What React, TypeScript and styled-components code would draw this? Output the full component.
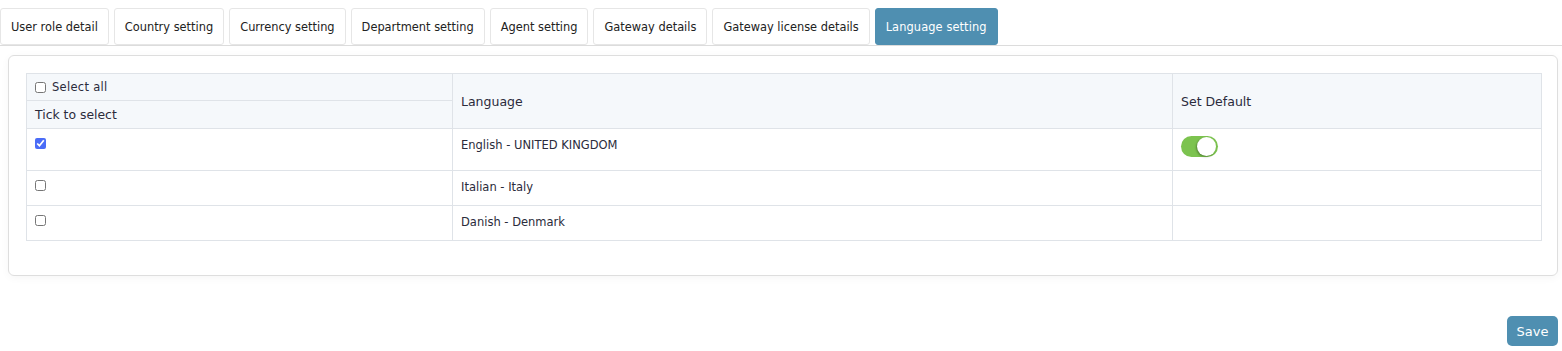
import React, { useState } from 'react'
import styled, { createGlobalStyle } from 'styled-components'

const GlobalStyle = createGlobalStyle`
  * { box-sizing: border-box; }
  body {
    margin: 0;
    background: #ffffff;
    font-family: "DejaVu Sans", "Open Sans", sans-serif;
    color: #212529;
  }
`

const tabs = [
  'User role detail',
  'Country setting',
  'Currency setting',
  'Department setting',
  'Agent setting',
  'Gateway details',
  'Gateway license details',
  'Language setting',
]

const languages = [
  { name: 'English - UNITED KINGDOM', checked: true, isDefault: true },
  { name: 'Italian - Italy', checked: false, isDefault: false },
  { name: 'Danish - Denmark', checked: false, isDefault: false },
]

const App: React.FC = () => {
  const [rows, setRows] = useState(languages)
  const allChecked = rows.every((r) => r.checked)

  const toggleRow = (i: number) =>
    setRows(rows.map((r, idx) => (idx === i ? { ...r, checked: !r.checked } : r)))

  return (
    <Page>
      <GlobalStyle />
      <TabBar>
        {tabs.map((tab) => (
          <Tab key={tab} $active={tab === 'Language setting'}>
            {tab}
          </Tab>
        ))}
      </TabBar>

      <Card>
        <Table>
          <thead>
            <tr>
              <HeadCell $narrow>
                <CheckLabel>
                  <Check
                    type="checkbox"
                    checked={allChecked}
                    onChange={() => setRows(rows.map((r) => ({ ...r, checked: !allChecked })))}
                  />
                  Select all
                </CheckLabel>
              </HeadCell>
              <HeadCell rowSpan={2} $width="720px">Language</HeadCell>
              <HeadCell rowSpan={2}>Set Default</HeadCell>
            </tr>
            <tr>
              <HeadCell $sub>Tick to select</HeadCell>
            </tr>
          </thead>
          <tbody>
            {rows.map((row, i) => (
              <tr key={row.name}>
                <Cell $tall={row.isDefault}>
                  <Check type="checkbox" checked={row.checked} onChange={() => toggleRow(i)} />
                </Cell>
                <Cell $tall={row.isDefault}>{row.name}</Cell>
                <Cell $tall={row.isDefault}>
                  {row.isDefault && (
                    <Switch>
                      <Knob />
                    </Switch>
                  )}
                </Cell>
              </tr>
            ))}
          </tbody>
        </Table>
      </Card>

      <Footer>
        <SaveButton>Save</SaveButton>
      </Footer>
    </Page>
  )
}

export default App

const Page = styled.div`
  width: 1562px;
  height: 351px;
  padding-top: 8px;
`

const TabBar = styled.div`
  display: flex;
  gap: 5px;
  border-bottom: 1px solid #dcdcdc;
  height: 38px;
`

const Tab = styled.div<{ $active?: boolean }>`
  height: 37px;
  padding: 0 10px;
  display: flex;
  align-items: center;
  font-size: 11.4px;
  color: ${({ $active }) => ($active ? '#ffffff' : '#222')};
  background: ${({ $active }) => ($active ? '#4f8fb1' : '#ffffff')};
  border: 1px solid ${({ $active }) => ($active ? '#4f8fb1' : '#e6e6e6')};
  border-radius: 3px;
  letter-spacing: ${({ $active }) => ($active ? '0.1px' : '0')};
  white-space: nowrap;
`

const Card = styled.div`
  margin: 9px 4px 0 8px;
  height: 221px;
  border: 1px solid #dedede;
  border-radius: 6px;
  box-shadow: 0 2px 8px rgba(0, 0, 0, 0.04);
  padding: 17px 17px;
`

const Table = styled.table`
  width: 1516px;
  border-collapse: collapse;
  font-size: 11.5px;
  color: #2b2b3b;
`

const HeadCell = styled.th<{ $narrow?: boolean; $sub?: boolean; $width?: string }>`
  background: #f5f8fb;
  border: 1px solid #dfe3e8;
  text-align: left;
  font-weight: 400;
  font-size: ${({ $sub, $narrow }) => ($sub ? '12.4px' : $narrow ? '11.5px' : '12.5px')};
  padding: ${({ $narrow }) => ($narrow ? '3px 8px' : '0 8px')};
  height: ${({ $narrow, $sub }) => ($narrow ? '27px' : $sub ? '28px' : 'auto')};
  width: ${({ $width, $narrow, $sub }) => $width ?? ($narrow || $sub ? '426px' : 'auto')};
  vertical-align: middle;
`

const CheckLabel = styled.label`
  display: flex;
  align-items: center;
  gap: 6px;
  letter-spacing: 0.3px;
`

const Check = styled.input`
  width: 11px;
  height: 11px;
  margin: 0;
  accent-color: #4a6cf7;
`

const Cell = styled.td<{ $tall?: boolean }>`
  border: 1px solid #dfe3e8;
  height: ${({ $tall }) => ($tall ? '42px' : '35px')};
  padding: 9px 8px 0;
  vertical-align: top;
`

const Switch = styled.div`
  width: 37px;
  height: 21px;
  border-radius: 11px;
  background: #7cc34f;
  position: relative;
  margin-top: -2px;
`

const Knob = styled.span`
  position: absolute;
  right: 2px;
  top: 1px;
  width: 19px;
  height: 19px;
  border-radius: 50%;
  background: #fff;
  box-shadow: -1px 1px 2px rgba(0, 0, 0, 0.3);
`

const Footer = styled.div`
  display: flex;
  justify-content: flex-end;
  padding: 40px 4px 0 0;
`

const SaveButton = styled.button`
  height: 30px;
  width: 51px;
  border: none;
  border-radius: 5px;
  background: #4f8fb1;
  color: #fff;
  font-family: inherit;
  font-size: 13px;
`
